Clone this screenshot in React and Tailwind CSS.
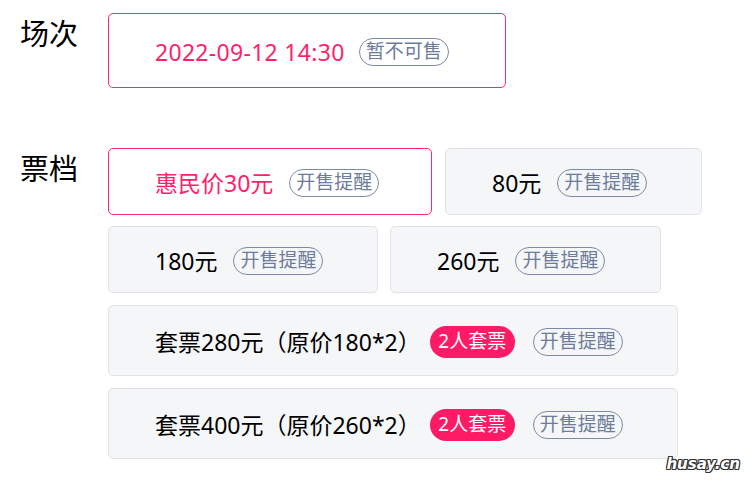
import React from "react";

const font = { fontFamily: '"Noto Sans", "Noto Sans CJK SC", sans-serif' };

function Remind({ label = "开售提醒", className = "" }) {
  return (
    <span className={"inline-flex items-center justify-center w-[90px] h-[28px] rounded-full border border-[#7d89a6] text-[#6e7c9c] text-[19px] leading-none whitespace-nowrap " + className}>
      {label}
    </span>
  );
}

function PairBadge() {
  return (
    <span className="inline-flex items-center justify-center ml-[9px] w-[85px] h-[32px] rounded-full bg-[#ff1a66] text-white text-[19px] leading-none whitespace-nowrap">
      2人套票
    </span>
  );
}

function Ticket({ w, text, active, pair }) {
  return (
    <div
      className={
        "flex items-center pl-[46px] pt-[2px] rounded-[5px] border " +
        w +
        (pair ? " h-[71px]" : " h-[67px] gap-[16px]") +
        (active
          ? " border-[#ff2a6d] bg-white text-[#ff1f6b]"
          : " border-[#e0e2e7] bg-[#f5f6f8] text-black")
      }
    >
      <span className="text-[23px] leading-[28px] whitespace-nowrap">{text}</span>
      {pair && <PairBadge />}
      <Remind className={pair ? "ml-[18px]" : ""} />
    </div>
  );
}

export default function App() {
  return (
    <div className="relative w-[756px] h-[485px] bg-white" style={font}>
      <div className="flex pt-[13px]">
        <div className="w-[108px] pl-[20px] pt-[3px] text-[29px] leading-[36px] text-black">场次</div>
        <div className="w-[398px] h-[75px] flex items-center gap-[14px] pl-[46px] pt-[2px] rounded-[5px] border border-[#ff2a6d] bg-white">
          <span className="text-[23px] leading-[28px] text-[#ff1f6b] whitespace-nowrap tracking-[0.3px]">2022-09-12 14:30</span>
          <Remind label="暂不可售" />
        </div>
      </div>

      <div className="flex pt-[60px]">
        <div className="w-[108px] shrink-0 pl-[20px] pt-[3px] text-[29px] leading-[36px] text-black">票档</div>
        <div className="flex flex-col gap-[12px]">
          <div className="flex gap-[13px] -mb-[1px]">
            <Ticket w="w-[324px]" text="惠民价30元" active />
            <Ticket w="w-[257px]" text="80元" />
          </div>
          <div className="flex gap-[12px]">
            <Ticket w="w-[270px]" text="180元" />
            <Ticket w="w-[271px]" text="260元" />
          </div>
          <Ticket w="w-[570px]" text="套票280元（原价180*2）" pair />
          <Ticket w="w-[570px]" text="套票400元（原价260*2）" pair />
        </div>
      </div>

      <div
        className="absolute right-[16px] bottom-[13px] text-[15px] font-bold italic text-white leading-none"
        style={{ fontFamily: '"DejaVu Sans", sans-serif', textShadow: "1px 0 #333, -1px 0 #333, 0 1px #333, 0 -1px #333, 1px 1px #333, -1px -1px #333, 1px -1px #333, -1px 1px #333" }}
      >
        husay.cn
      </div>
    </div>
  );
}
